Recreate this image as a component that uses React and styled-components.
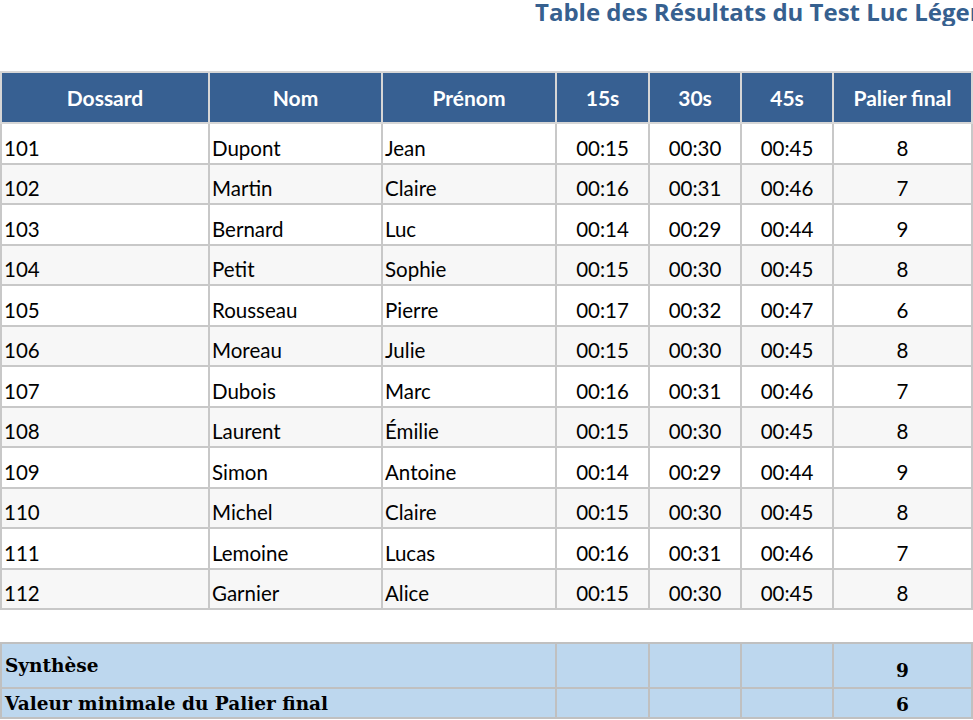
import React from "react";
import styled, { createGlobalStyle } from "styled-components";

const rows = [
  ["101", "Dupont", "Jean", "00:15", "00:30", "00:45", "8"],
  ["102", "Martin", "Claire", "00:16", "00:31", "00:46", "7"],
  ["103", "Bernard", "Luc", "00:14", "00:29", "00:44", "9"],
  ["104", "Petit", "Sophie", "00:15", "00:30", "00:45", "8"],
  ["105", "Rousseau", "Pierre", "00:17", "00:32", "00:47", "6"],
  ["106", "Moreau", "Julie", "00:15", "00:30", "00:45", "8"],
  ["107", "Dubois", "Marc", "00:16", "00:31", "00:46", "7"],
  ["108", "Laurent", "Émilie", "00:15", "00:30", "00:45", "8"],
  ["109", "Simon", "Antoine", "00:14", "00:29", "00:44", "9"],
  ["110", "Michel", "Claire", "00:15", "00:30", "00:45", "8"],
  ["111", "Lemoine", "Lucas", "00:16", "00:31", "00:46", "7"],
  ["112", "Garnier", "Alice", "00:15", "00:30", "00:45", "8"],
];

const columns = [
  { label: "Dossard", width: 208 },
  { label: "Nom", width: 173 },
  { label: "Prénom", width: 174 },
  { label: "15s", width: 93 },
  { label: "30s", width: 92 },
  { label: "45s", width: 92 },
  { label: "Palier final", width: 139 },
];

const GlobalStyle = createGlobalStyle`
  body {
    margin: 0;
    background: #ffffff;
    font-family: "Lato", "Noto Sans", sans-serif;
    overflow: hidden;
  }
`;

function App() {
  return (
    <Page>
      <GlobalStyle />
      <TitleBar>
        <Title>Table des Résultats du Test Luc Léger</Title>
      </TitleBar>
      <Sheet>
        <colgroup>
          {columns.map((c) => (
            <col key={c.label} style={{ width: c.width }} />
          ))}
        </colgroup>
        <thead>
          <tr>
            {columns.map((c) => (
              <HeadCell key={c.label}>{c.label}</HeadCell>
            ))}
          </tr>
        </thead>
        <tbody>
          {rows.map((r, i) => (
            <Row key={r[0]} $alt={i % 2 === 1}>
              {r.map((v, j) => (
                <Cell key={j} $center={j >= 3}>
                  {v}
                </Cell>
              ))}
            </Row>
          ))}
        </tbody>
      </Sheet>
      <Summary>
        <colgroup>
          {columns.map((c) => (
            <col key={c.label} style={{ width: c.width }} />
          ))}
        </colgroup>
        <tbody>
          <SumRow $h={45}>
            <SumLabel colSpan={3}>Synthèse</SumLabel>
            <SumCell />
            <SumCell />
            <SumCell />
            <SumValue $pad={6}>9</SumValue>
          </SumRow>
          <SumRow $h={30}>
            <SumLabel colSpan={3}>Valeur minimale du Palier final</SumLabel>
            <SumCell />
            <SumCell />
            <SumCell />
            <SumValue $pad={2}>6</SumValue>
          </SumRow>
        </tbody>
      </Summary>
    </Page>
  );
}

export default App;

const Page = styled.div`
  width: 973px;
  height: 720px;
  overflow: hidden;
`;

const TitleBar = styled.div`
  height: 26px;
  padding-left: 535px;
  margin-bottom: 45px;
  white-space: nowrap;
  overflow: hidden;
`;

const Title = styled.h1`
  margin: 0;
  font-family: "Open Sans", "Noto Sans", sans-serif;
  font-size: 24px;
  line-height: 24px;
  font-weight: 700;
  color: #36608f;
`;

const Sheet = styled.table`
  width: 973px;
  border-collapse: collapse;
  table-layout: fixed;
  border: 2px solid #c8c8c8;
`;

const HeadCell = styled.th`
  height: 49px;
  padding: 0;
  background: #376092;
  color: #ffffff;
  font-size: 21px;
  font-weight: 700;
  text-align: center;
  vertical-align: middle;
  border: 2px solid #d6d6d6;
`;

const Row = styled.tr`
  height: 40.5px;
  background: ${(p) => (p.$alt ? "#f7f7f7" : "#ffffff")};
`;

const Cell = styled.td`
  padding: 0 2px 3px;
  font-size: 20.5px;
  color: #000000;
  text-align: ${(p) => (p.$center ? "center" : "left")};
  vertical-align: bottom;
  border: 2px solid #c8c8c8;
  white-space: nowrap;
  overflow: hidden;
`;

const Summary = styled.table`
  width: 973px;
  margin-top: 32px;
  border-collapse: collapse;
  table-layout: fixed;
  border: 2px solid #c0c0c0;
`;

const SumRow = styled.tr`
  height: ${(p) => p.$h}px;
  background: #bdd7ee;
`;

const SumCell = styled.td`
  padding: 0;
  border: 2px solid #c0c0c0;
`;

const SumLabel = styled(SumCell)`
  padding: 0 3px;
  font-family: "DejaVu Serif", serif;
  font-size: 18.5px;
  font-weight: 700;
  color: #000000;
  text-align: left;
  vertical-align: middle;
`;

const SumValue = styled(SumCell)`
  padding: 0 0 ${(p) => p.$pad}px;
  font-family: "DejaVu Serif", serif;
  font-size: 18.5px;
  font-weight: 700;
  text-align: center;
  vertical-align: bottom;
`;
